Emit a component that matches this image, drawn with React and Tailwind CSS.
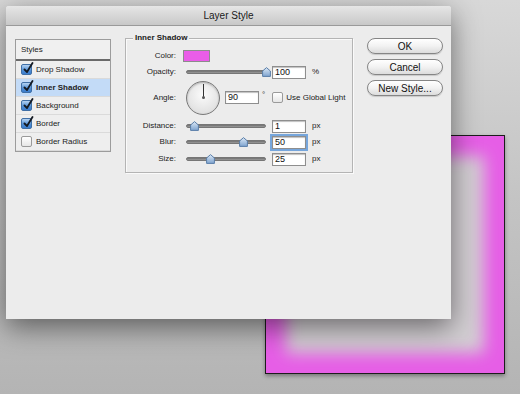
import React from "react";

function Checkbox({ checked }) {
  return (
    <div className="relative w-[11px] h-[11px] shrink-0">
      <div
        className={
          checked
            ? "w-[11px] h-[11px] rounded-[2px] border border-[#3f6fa6] bg-[linear-gradient(180deg,#b5d3f3,#4f8fd6_60%,#3b7ccc)]"
            : "w-[11px] h-[11px] rounded-[2px] border border-[#9a9a9a] bg-[linear-gradient(180deg,#ffffff,#e6e6e6)]"
        }
      />
      {checked && (
        <svg className="absolute left-[1.5px] top-[-2px]" width="11" height="12" viewBox="0 0 11 12">
          <path d="M1.5 7.5 L4 10 L9.5 1" stroke="#151a22" strokeWidth="1.8" fill="none" strokeLinecap="round" strokeLinejoin="round" />
        </svg>
      )}
    </div>
  );
}

function Thumb() {
  return (
    <svg width="9" height="10" viewBox="0 0 9 10">
      <defs>
        <linearGradient id="thg" x1="0" y1="0" x2="0" y2="1">
          <stop offset="0" stopColor="#dbe8f6" />
          <stop offset="1" stopColor="#7fa4cf" />
        </linearGradient>
      </defs>
      <path d="M4.5 0.6 L8.4 4 L8.4 9.4 L0.6 9.4 L0.6 4 Z" fill="url(#thg)" stroke="#5a7ea8" strokeWidth="1" />
    </svg>
  );
}

function Slider({ pos }) {
  return (
    <div className="relative w-[80px] h-[10px] flex items-center shrink-0">
      <div className="w-full h-[4px] rounded-full bg-[linear-gradient(180deg,#6e6e6e,#9c9c9c)] border border-[#767676]" />
      <div className="absolute top-0" style={{ left: pos - 4.5 }}>
        <Thumb />
      </div>
    </div>
  );
}

function Field({ value, focus }) {
  return (
    <div
      className={
        "w-[34px] h-[13px] bg-white border border-[#8e8e8e] shadow-[inset_0_1px_1px_rgba(0,0,0,0.25)] pl-[2px] text-[9px] leading-[11px] text-[#111] shrink-0" +
        (focus ? " outline outline-2 outline-[#76a6dc]" : "")
      }
    >
      {value}
    </div>
  );
}

function Label({ children }) {
  return <div className="w-[50px] text-right text-[8px] text-[#222] shrink-0">{children}</div>;
}

function SliderRow({ label, pos, value, unit, focus, className }) {
  return (
    <div className={"flex items-center h-[14px] " + className}>
      <Label>{label}</Label>
      <div className="ml-[10px]">
        <Slider pos={pos} />
      </div>
      <div className="ml-[6px]">
        <Field value={value} focus={focus} />
      </div>
      <div className="ml-[6px] text-[8px] text-[#222]">{unit}</div>
    </div>
  );
}

function Button({ children }) {
  return (
    <div className="h-[16px] w-[76px] rounded-full border border-[#858585] bg-[linear-gradient(180deg,#ffffff,#f2f2f2_50%,#dcdcdc)] shadow-[0_1px_1px_rgba(0,0,0,0.15)] flex items-center justify-center text-[10px] text-[#111]">
      {children}
    </div>
  );
}

export default function App() {
  const styles = [
    { name: "Drop Shadow", checked: true },
    { name: "Inner Shadow", checked: true, selected: true },
    { name: "Background", checked: true },
    { name: "Border", checked: true },
    { name: "Border Radius", checked: false },
  ];
  return (
    <div className="relative w-[520px] h-[394px] overflow-hidden bg-[linear-gradient(180deg,#d8d8d8,#c4c4c4_50%,#b4b4b4)] font-['Liberation_Sans',Arial,sans-serif]">
      {/* pink preview box */}
      <div className="absolute left-[265px] top-[135px] w-[240px] h-[239px] border border-[#1c1c1c] bg-[#d3cfd3] shadow-[inset_0_0_16px_20px_#e65ee6,0_2px_4px_rgba(0,0,0,0.35)]" />

      {/* dialog window */}
      <div className="absolute left-[6px] top-[6px] w-[445px] h-[313px] bg-[#ececec] shadow-[0_8px_28px_rgba(0,0,0,0.5)] rounded-t-[3px] flex flex-col">
        <div className="h-[20px] shrink-0 rounded-t-[3px] bg-[linear-gradient(180deg,#e6e6e6,#c8c8c8)] border-b border-[#9a9a9a] flex items-center justify-center text-[10px] text-[#1a1a1a]">
          Layer Style
        </div>
        <div className="flex pt-[12px] pl-[9px]">
          {/* styles list */}
          <div className="mt-[1px] w-[96px] h-[113px] border border-[#9c9c9c] bg-[#eeeeee] flex flex-col shrink-0">
            <div className="h-[21px] shrink-0 border-b-[2px] border-[#6a6a6a] flex items-center pl-[5px] text-[8px] text-[#222] bg-[#f0f0f0]">
              Styles
            </div>
            {styles.map((s) => (
              <div
                key={s.name}
                className={
                  "h-[18px] shrink-0 border-b border-[#dadada] flex items-center pl-[5px] gap-[4px] text-[8px] text-[#222] " +
                  (s.selected ? "bg-[#c3dbf7]" : "")
                }
              >
                <Checkbox checked={s.checked} />
                <span className={s.selected ? "font-bold" : ""}>{s.name}</span>
              </div>
            ))}
          </div>

          {/* inner shadow group */}
          <div className="relative ml-[14px] w-[228px] h-[135px] border border-[#b4b4b4] shadow-[1px_1px_0_#fafafa,inset_1px_1px_0_#fafafa] shrink-0 flex flex-col pt-[10px]">
            <div className="absolute left-[7px] top-[-6px] px-[2px] bg-[#ececec] text-[8px] font-bold text-[#1a1a1a] leading-[10px]">
              Inner Shadow
            </div>
            <div className="flex items-center h-[14px]">
              <Label>Color:</Label>
              <div className="ml-[7px] w-[27px] h-[12px] bg-[#ea5de8] border border-[#8c8c8c]" />
            </div>
            <SliderRow className="mt-[2px]" label="Opacity:" pos={80} value="100" unit="%" />
            <div className="flex items-center h-[35px] mt-[1px]">
              <Label>Angle:</Label>
              <div className="ml-[10px] relative w-[34px] h-[34px] rounded-full border-[1.5px] border-[#7a7a7a] bg-[radial-gradient(circle_at_50%_40%,#fbfbfb,#e2e2e2_70%,#cfcfcf)] shadow-[inset_0_1px_2px_rgba(0,0,0,0.25)] shrink-0">
                <div className="absolute left-[15.5px] top-[2px] w-[1px] h-[14px] bg-[#333]" />
                <div className="absolute left-[14.5px] top-[14.5px] w-[3px] h-[3px] rounded-full bg-[#555]" />
              </div>
              <div className="ml-[5px]">
                <Field value="90" />
              </div>
              <div className="ml-[3px] text-[8px] text-[#333] self-start mt-[9px]">°</div>
              <div className="ml-[7px]">
                <Checkbox checked={false} />
              </div>
              <div className="ml-[3px] text-[8px] text-[#222]">Use Global Light</div>
            </div>
            <SliderRow className="mt-[4px]" label="Distance:" pos={8} value="1" unit="px" />
            <SliderRow className="mt-[2px]" label="Blur:" pos={57} value="50" unit="px" focus />
            <SliderRow className="mt-[3px]" label="Size:" pos={24} value="25" unit="px" />
          </div>

          {/* buttons */}
          <div className="ml-[14px] flex flex-col gap-[5px]">
            <Button>OK</Button>
            <Button>Cancel</Button>
            <Button>New Style...</Button>
          </div>
        </div>
      </div>
    </div>
  );
}
